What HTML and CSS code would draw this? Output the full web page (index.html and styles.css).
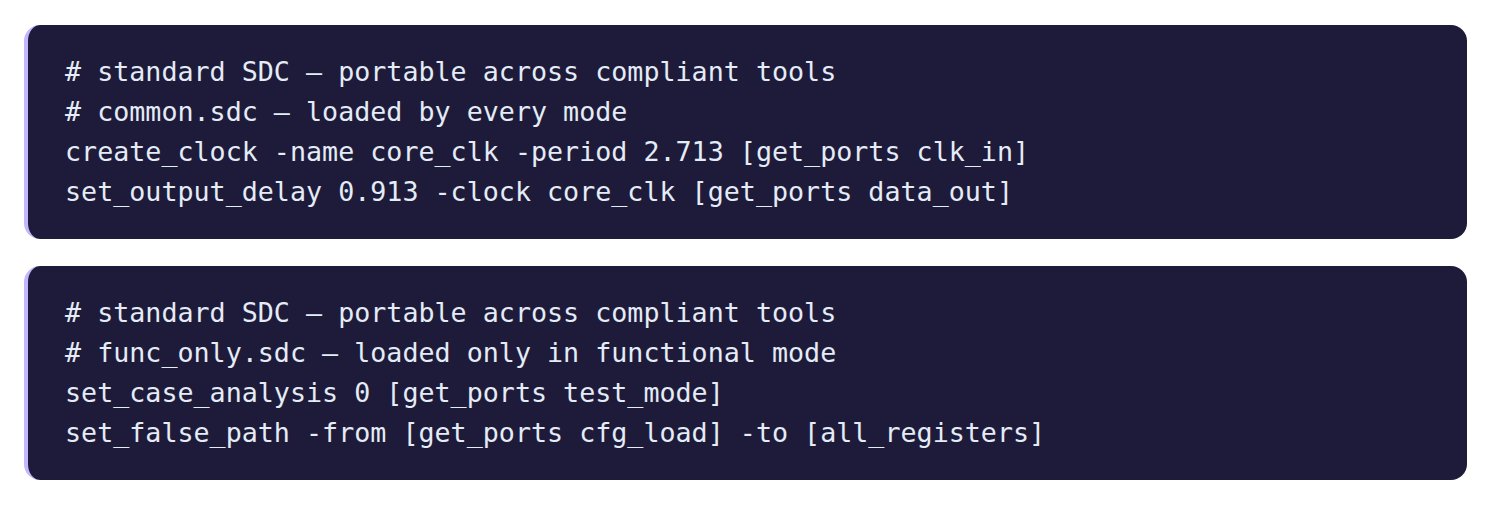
FILE: index.html
```html
<!DOCTYPE html>
<html>
<head>
<meta charset="utf-8">
<link rel="stylesheet" href="styles.css">
</head>
<body>
<div class="page">
  <pre class="code"># standard SDC — portable across compliant tools
# common.sdc — loaded by every mode
create_clock -name core_clk -period 2.713 [get_ports clk_in]
set_output_delay 0.913 -clock core_clk [get_ports data_out]</pre>
  <pre class="code"># standard SDC — portable across compliant tools
# func_only.sdc — loaded only in functional mode
set_case_analysis 0 [get_ports test_mode]
set_false_path -from [get_ports cfg_load] -to [all_registers]</pre>
</div>
</body>
</html>
```

FILE: styles.css
```css
html, body {
  margin: 0;
  padding: 0;
  background: #ffffff;
}
.page {
  display: flex;
  flex-direction: column;
  gap: 27px;
  padding: 25px 27px 0 24px;
}
.code {
  margin: 0;
  background: #1e1b3a;
  color: #e4ecf6;
  border-left: 4px solid #c4b5fd;
  border-radius: 16px;
  padding: 27px 30px 27px 37px;
  font-family: "DejaVu Sans Mono", monospace;
  font-size: 26.7px;
  line-height: 40px;
  white-space: pre;
}
```
